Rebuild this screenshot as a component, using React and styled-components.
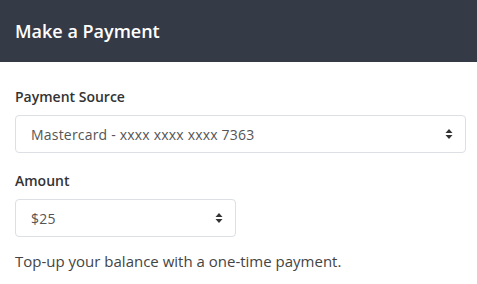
import React from 'react';
import styled, { createGlobalStyle } from 'styled-components';

const GlobalStyle = createGlobalStyle`
  html, body {
    margin: 0;
    padding: 0;
    background: #fff;
    font-family: "Open Sans", "Liberation Sans", sans-serif;
    font-size: 14px;
    color: #444;
  }
`;

const Header = styled.div`
  height: 62px;
  background-color: #343a46;
  display: flex;
  align-items: center;
  padding: 0 15px;
`;

const Title = styled.h1`
  margin: 0;
  font-size: 18px;
  font-weight: 600;
  color: #fff;
`;

const Body = styled.div`
  padding: 24px 11px 0 15px;
`;

const Field = styled.div`
  margin-bottom: ${(p) => p.$spacing || 17}px;
`;

const Label = styled.label`
  display: block;
  font-size: 14px;
  font-weight: 600;
  color: #333;
  line-height: 21px;
  margin-bottom: 8px;
`;

const Select = styled.div`
  width: ${(p) => p.width || '100%'};
  box-sizing: border-box;
  height: 38px;
  border: 1px solid #dcdfe3;
  border-radius: 4px;
  display: flex;
  align-items: center;
  justify-content: space-between;
  padding: 0 12px 0 15px;
  color: #555;
  font-size: 14px;
  letter-spacing: 0.2px;
`;

const Arrows = () => (
  <svg width="8" height="12" viewBox="0 0 8 12">
    <path d="M4 1 L7.5 5 H0.5 Z" fill="#333" />
    <path d="M4 11 L7.5 7 H0.5 Z" fill="#333" />
  </svg>
);

const Note = styled.p`
  margin: 0;
  font-size: 15px;
  line-height: 21px;
  color: #444;
`;

export default function App() {
  return (
    <>
      <GlobalStyle />
      <Header>
        <Title>Make a Payment</Title>
      </Header>
      <Body>
        <Field>
          <Label>Payment Source</Label>
          <Select>
            <span>Mastercard - xxxx xxxx xxxx 7363</span>
            <Arrows />
          </Select>
        </Field>
        <Field $spacing={14}>
          <Label>Amount</Label>
          <Select width="221px">
            <span>$25</span>
            <Arrows />
          </Select>
        </Field>
        <Note>Top-up your balance with a one-time payment.</Note>
      </Body>
    </>
  );
}
